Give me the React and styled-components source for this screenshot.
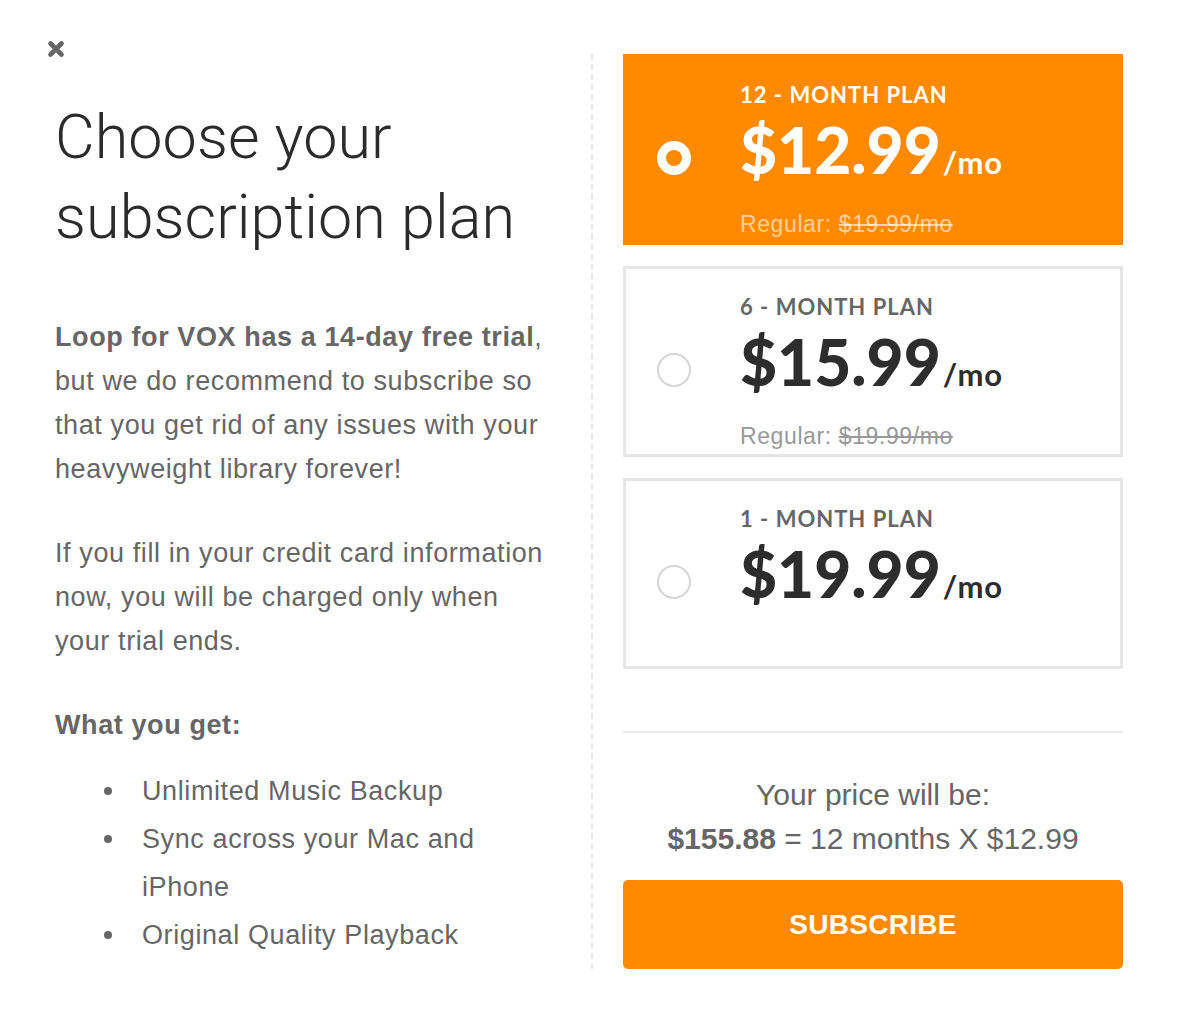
import React from "react";
import styled, { createGlobalStyle } from "styled-components";

const Global = createGlobalStyle`
  html, body { margin: 0; padding: 0; background: #fff; }
  body { font-family: "Liberation Sans", Arial, sans-serif; }
  * { box-sizing: border-box; }
`;

const ORANGE = "#ff8a00";

const Modal = styled.div`
  position: relative;
  display: flex;
  align-items: stretch;
  padding: 54px 0 0 55px;
  width: 1186px;
`;

const CloseButton = styled.button`
  position: absolute;
  top: 39px;
  left: 46px;
  width: 20px;
  height: 20px;
  padding: 0;
  border: 0;
  background: transparent;
  cursor: pointer;
  display: flex;
  align-items: center;
  justify-content: center;
`;

const LeftColumn = styled.section`
  width: 538px;
  padding-right: 36px;
  border-right: 2px dashed #e6e6e6;
  color: #666;
`;

const Title = styled.h1`
  margin: 43px 0 0;
  font-family: Roboto, "Liberation Sans", sans-serif;
  font-weight: 300;
  font-size: 61px;
  line-height: 80px;
  color: #2b2b2b;
  letter-spacing: 0.1px;
`;

const Paragraph = styled.p`
  margin: ${(p) => p.$top}px 0 0;
  font-size: 27px;
  line-height: 44px;
  letter-spacing: 0.6px;
  color: #666;
`;

const Strong = styled.strong`
  font-weight: 700;
`;

const FeatureList = styled.ul`
  list-style: none;
  margin: 20px 0 0;
  padding: 0 0 0 49px;
`;

const FeatureItem = styled.li`
  display: grid;
  grid-template-columns: 38px 360px;
  font-size: 27px;
  line-height: 48px;
  letter-spacing: 0.6px;
  color: #666;
`;

const Bullet = styled.span`
  width: 8px;
  height: 8px;
  margin-top: 20px;
  border-radius: 50%;
  background: #666;
`;

const RightColumn = styled.section`
  width: 500px;
  margin-left: 30px;
  display: flex;
  flex-direction: column;
`;

const Plans = styled.div`
  display: flex;
  flex-direction: column;
  gap: 21px;
`;

const PlanCard = styled.label`
  display: grid;
  grid-template-columns: 114px 1fr;
  height: 191px;
  padding: 25px 0 0 0;
  border: 3px solid ${(p) => (p.$selected ? ORANGE : "#e6e6e6")};
  background: ${(p) => (p.$selected ? ORANGE : "#fff")};
  cursor: pointer;
`;

const RadioCol = styled.div`
  padding: 59px 0 0 31px;
`;

const Radio = styled.span`
  display: block;
  width: 34px;
  height: 34px;
  border-radius: 50%;
  border: ${(p) => (p.$selected ? "9px solid #fff" : "2px solid #d6d6d6")};
  background: ${(p) => (p.$selected ? ORANGE : "#fff")};
`;

const PlanBody = styled.div`
  display: flex;
  flex-direction: column;
`;

const PlanLabel = styled.div`
  font-family: Lato, "Liberation Sans", sans-serif;
  font-weight: 700;
  font-size: 22px;
  line-height: 26px;
  letter-spacing: 1px;
  color: ${(p) => (p.$selected ? "#fff" : "#666")};
`;

const PriceRow = styled.div`
  margin-top: 9px;
  display: flex;
  align-items: baseline;
  font-family: Lato, "Liberation Sans", sans-serif;
  color: ${(p) => (p.$selected ? "#fff" : "#2d2d2d")};
`;

const Price = styled.span`
  font-weight: 900;
  font-size: 64px;
  line-height: 66px;
  letter-spacing: 0;
`;

const PerMonth = styled.span`
  margin-left: 2px;
  font-weight: 700;
  font-size: 31px;
  letter-spacing: 1px;
`;

const Regular = styled.div`
  margin-top: 28px;
  font-size: 23px;
  line-height: 26px;
  letter-spacing: 0.6px;
  color: ${(p) => (p.$selected ? "rgba(255,255,255,0.6)" : "#999")};
`;

const Strike = styled.s`
  text-decoration-thickness: 2px;
`;

const Divider = styled.hr`
  margin: 62px 0 0;
  border: 0;
  height: 2px;
  background: #e8e8e8;
`;

const Summary = styled.div`
  margin-top: 40px;
  text-align: center;
  font-size: 30px;
  line-height: 44px;
  color: #666;
`;

const SubscribeButton = styled.button`
  margin-top: 19px;
  height: 89px;
  width: 100%;
  border: 0;
  border-radius: 5px;
  background: ${ORANGE};
  color: #fff;
  font-family: "Liberation Sans", Arial, sans-serif;
  font-weight: 700;
  font-size: 28px;
  letter-spacing: 0.3px;
  cursor: pointer;
`;

const plans = [
  { id: 12, label: "12 - MONTH PLAN", price: "$12.99", regular: "$19.99/mo" },
  { id: 6, label: "6 - MONTH PLAN", price: "$15.99", regular: "$19.99/mo" },
  { id: 1, label: "1 - MONTH PLAN", price: "$19.99", regular: null },
];

const features = [
  "Unlimited Music Backup",
  "Sync across your Mac and iPhone",
  "Original Quality Playback",
];

export default function App() {
  const [selected, setSelected] = React.useState(12);
  return (
    <>
      <Global />
      <Modal>
        <CloseButton aria-label="Close">
          <svg width="18" height="18" viewBox="0 0 18 18">
            <path
              d="M3.5 3.5 L14.5 14.5 M14.5 3.5 L3.5 14.5"
              stroke="#666"
              strokeWidth="4.6"
              strokeLinecap="round"
            />
          </svg>
        </CloseButton>
        <LeftColumn>
          <Title>
            Choose your
            <br />
            subscription plan
          </Title>
          <Paragraph $top={58}>
            <Strong>Loop for VOX has a 14-day free trial</Strong>, but we do
            recommend to subscribe so that you get rid of any issues with your
            heavyweight library forever!
          </Paragraph>
          <Paragraph $top={40}>
            If you fill in your credit card information now, you will be
            charged only when your trial ends.
          </Paragraph>
          <Paragraph $top={40}>
            <Strong>What you get:</Strong>
          </Paragraph>
          <FeatureList>
            {features.map((f) => (
              <FeatureItem key={f}>
                <Bullet />
                <span>{f}</span>
              </FeatureItem>
            ))}
          </FeatureList>
        </LeftColumn>
        <RightColumn>
          <Plans>
            {plans.map((p) => {
              const sel = p.id === selected;
              return (
                <PlanCard
                  key={p.id}
                  $selected={sel}
                  onClick={() => setSelected(p.id)}
                >
                  <RadioCol>
                    <Radio $selected={sel} />
                  </RadioCol>
                  <PlanBody>
                    <PlanLabel $selected={sel}>{p.label}</PlanLabel>
                    <PriceRow $selected={sel}>
                      <Price>{p.price}</Price>
                      <PerMonth>/mo</PerMonth>
                    </PriceRow>
                    {p.regular && (
                      <Regular $selected={sel}>
                        Regular: <Strike>{p.regular}</Strike>
                      </Regular>
                    )}
                  </PlanBody>
                </PlanCard>
              );
            })}
          </Plans>
          <Divider />
          <Summary>
            Your price will be:
            <br />
            <Strong>$155.88</Strong> = 12 months X $12.99
          </Summary>
          <SubscribeButton>SUBSCRIBE</SubscribeButton>
        </RightColumn>
      </Modal>
    </>
  );
}
